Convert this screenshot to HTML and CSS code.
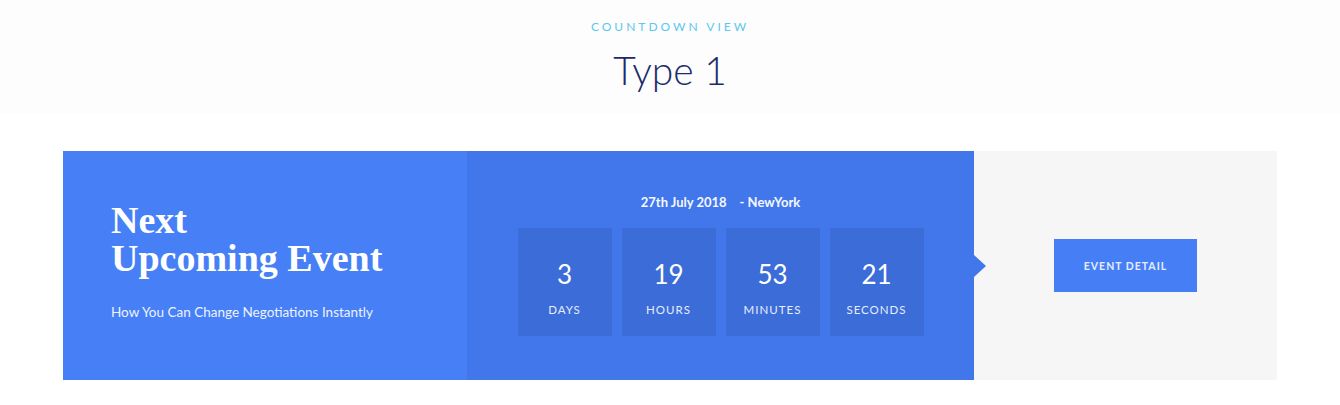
FILE: index.html
```html
<!DOCTYPE html>
<html>
<head>
<meta charset="utf-8">
<link rel="stylesheet" href="styles.css">
</head>
<body>
<header class="head">
  <div class="eyebrow">COUNTDOWN VIEW</div>
  <h1 class="title">Type 1</h1>
</header>
<section class="wrap">
  <div class="card">
    <div class="intro">
      <h2 class="intro-title">Next<br>Upcoming Event</h2>
      <p class="intro-sub">How You Can Change Negotiations Instantly</p>
    </div>
    <div class="timer">
      <div class="date"><span>27th July 2018</span><span class="city">- NewYork</span></div>
      <div class="boxes">
        <div class="box"><div class="num">3</div><div class="lbl">DAYS</div></div>
        <div class="box"><div class="num">19</div><div class="lbl">HOURS</div></div>
        <div class="box"><div class="num">53</div><div class="lbl">MINUTES</div></div>
        <div class="box"><div class="num">21</div><div class="lbl">SECONDS</div></div>
      </div>
    </div>
    <div class="action">
      <a class="btn" href="#">EVENT DETAIL</a>
    </div>
  </div>
</section>
</body>
</html>
```
FILE: styles.css
```css
html, body { margin: 0; padding: 0; background: #ffffff; }
body { font-family: "Source Sans Pro", Lato, "Noto Sans", sans-serif; }

.head {
  height: 114px;
  background: #fdfdfd;
  text-align: center;
  padding-top: 19px;
  box-sizing: border-box;
}
.eyebrow {
  font-family: Lato, sans-serif;
  font-size: 12px;
  letter-spacing: 3px;
  color: #5bc8ee;
  line-height: 16px;
}
.title {
  margin: 13px 0 0;
  font-family: Lato, sans-serif;
  font-weight: 300;
  font-size: 39px;
  line-height: 44px;
  color: #1c2a6b;
}

.wrap { padding: 37px 63px 0; }
.card {
  display: flex;
  height: 229px;
}
.intro {
  width: 404px;
  background: #467ff6;
  padding: 50px 0 0 48px;
  box-sizing: border-box;
  color: #fff;
}
.intro-title {
  margin: 0;
  font-family: "Liberation Serif", "DejaVu Serif", serif;
  font-weight: bold;
  font-size: 38px;
  line-height: 38px;
}
.intro-sub {
  margin: 27px 0 0;
  font-family: Lato, sans-serif;
  font-size: 13.5px;
  color: #eef3ff;
}
.timer {
  width: 507px;
  background: #4277eb;
  padding-top: 42px;
  box-sizing: border-box;
  position: relative;
  text-align: center;
  color: #fff;
}
.timer::after {
  content: "";
  position: absolute;
  right: -12px;
  top: 104px;
  border-left: 12px solid #4277eb;
  border-top: 11px solid transparent;
  border-bottom: 11px solid transparent;
}
.date {
  font-family: Lato, sans-serif;
  font-weight: bold;
  font-size: 13px;
  line-height: 18px;
  color: #f4f7ff;
}
.city { margin-left: 13px; }
.boxes {
  margin-top: 17px;
  display: flex;
  justify-content: center;
  gap: 10px;
}
.box {
  width: 94px;
  height: 108px;
  background: #3b6cd8;
  display: flex;
  flex-direction: column;
  align-items: center;
  padding-top: 31px;
  box-sizing: border-box;
}
.num {
  font-family: Lato, sans-serif;
  font-size: 26px;
  line-height: 30px;
}
.lbl {
  margin-top: 14px;
  font-family: Lato, sans-serif;
  font-size: 11.5px;
  letter-spacing: 1px;
  color: #e6edff;
}
.action {
  flex: 1;
  background: #f6f6f6;
  display: flex;
  align-items: center;
  justify-content: center;
}
.btn {
  width: 143px;
  height: 53px;
  background: #457ef5;
  color: #e6edff;
  font-family: Lato, sans-serif;
  font-weight: bold;
  font-size: 10.5px;
  letter-spacing: 1px;
  text-decoration: none;
  display: flex;
  align-items: center;
  justify-content: center;
}
```
